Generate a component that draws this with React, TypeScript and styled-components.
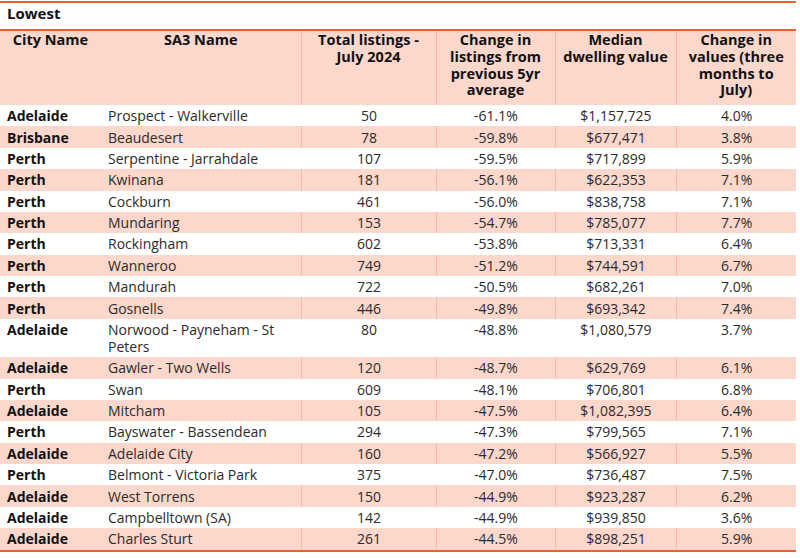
import React from "react";
import styled, { createGlobalStyle } from "styled-components";

const GlobalStyle = createGlobalStyle`
  body {
    margin: 0;
    background: #ffffff;
    font-family: "Open Sans", "Noto Sans", sans-serif;
  }
`;

interface Row {
  city: string;
  sa3: string;
  total: string;
  change: string;
  median: string;
  values: string;
}

const rows: Row[] = [
  { city: "Adelaide", sa3: "Prospect - Walkerville", total: "50", change: "-61.1%", median: "$1,157,725", values: "4.0%" },
  { city: "Brisbane", sa3: "Beaudesert", total: "78", change: "-59.8%", median: "$677,471", values: "3.8%" },
  { city: "Perth", sa3: "Serpentine - Jarrahdale", total: "107", change: "-59.5%", median: "$717,899", values: "5.9%" },
  { city: "Perth", sa3: "Kwinana", total: "181", change: "-56.1%", median: "$622,353", values: "7.1%" },
  { city: "Perth", sa3: "Cockburn", total: "461", change: "-56.0%", median: "$838,758", values: "7.1%" },
  { city: "Perth", sa3: "Mundaring", total: "153", change: "-54.7%", median: "$785,077", values: "7.7%" },
  { city: "Perth", sa3: "Rockingham", total: "602", change: "-53.8%", median: "$713,331", values: "6.4%" },
  { city: "Perth", sa3: "Wanneroo", total: "749", change: "-51.2%", median: "$744,591", values: "6.7%" },
  { city: "Perth", sa3: "Mandurah", total: "722", change: "-50.5%", median: "$682,261", values: "7.0%" },
  { city: "Perth", sa3: "Gosnells", total: "446", change: "-49.8%", median: "$693,342", values: "7.4%" },
  { city: "Adelaide", sa3: "Norwood - Payneham - St Peters", total: "80", change: "-48.8%", median: "$1,080,579", values: "3.7%" },
  { city: "Adelaide", sa3: "Gawler - Two Wells", total: "120", change: "-48.7%", median: "$629,769", values: "6.1%" },
  { city: "Perth", sa3: "Swan", total: "609", change: "-48.1%", median: "$706,801", values: "6.8%" },
  { city: "Adelaide", sa3: "Mitcham", total: "105", change: "-47.5%", median: "$1,082,395", values: "6.4%" },
  { city: "Perth", sa3: "Bayswater - Bassendean", total: "294", change: "-47.3%", median: "$799,565", values: "7.1%" },
  { city: "Adelaide", sa3: "Adelaide City", total: "160", change: "-47.2%", median: "$566,927", values: "5.5%" },
  { city: "Perth", sa3: "Belmont - Victoria Park", total: "375", change: "-47.0%", median: "$736,487", values: "7.5%" },
  { city: "Adelaide", sa3: "West Torrens", total: "150", change: "-44.9%", median: "$923,287", values: "6.2%" },
  { city: "Adelaide", sa3: "Campbelltown (SA)", total: "142", change: "-44.9%", median: "$939,850", values: "3.6%" },
  { city: "Adelaide", sa3: "Charles Sturt", total: "261", change: "-44.5%", median: "$898,251", values: "5.9%" },
];

const ORANGE = "#f0602a";
const SHADE = "#fbd7cc";
const RULE = "#f3bca6";

const Sheet = styled.div`
  width: 796px;
  padding-top: 1px;
`;

const Title = styled.div`
  border-top: 2px solid ${ORANGE};
  border-bottom: 2px solid ${ORANGE};
  height: 26px;
  padding-left: 7px;
  font-size: 15px;
  font-weight: 700;
  line-height: 21px;
  color: #111;
`;

const Table = styled.table`
  width: 796px;
  table-layout: fixed;
  border-collapse: collapse;
  border-bottom: 2px solid ${ORANGE};
  font-size: 14px;
  color: #2b2b2b;
`;

const HeadRow = styled.tr`
  background: ${SHADE};
  height: 74px;
`;

const HeadCell = styled.th<{ $ruled?: boolean }>`
  vertical-align: top;
  text-align: center;
  font-weight: 700;
  font-size: 14.5px;
  line-height: 16.8px;
  color: #111;
  padding: 1px 6px 3px;
  border-left: ${(p) => (p.$ruled ? `1px solid ${RULE}` : "none")};
`;

const BodyRow = styled.tr<{ $shaded: boolean }>`
  background: ${(p) => (p.$shaded ? SHADE : "#ffffff")};
  --rule: ${(p) => (p.$shaded ? RULE : "#ffffff")};
`;

const Cell = styled.td<{ $align?: "left" | "center"; $ruled?: boolean; $bold?: boolean }>`
  vertical-align: top;
  text-align: ${(p) => p.$align ?? "center"};
  font-weight: ${(p) => (p.$bold ? 700 : 400)};
  color: ${(p) => (p.$bold ? "#111" : "#2b2b2b")};
  line-height: 17px;
  padding: 2.2px 6px 2.2px 7px;
  border-left: ${(p) => (p.$ruled ? "1px solid var(--rule)" : "none")};
`;

export default function App() {
  return (
    <Sheet>
      <GlobalStyle />
      <Title>Lowest</Title>
      <Table>
        <colgroup>
          <col style={{ width: 101 }} />
          <col style={{ width: 200 }} />
          <col style={{ width: 135 }} />
          <col style={{ width: 119 }} />
          <col style={{ width: 121 }} />
          <col style={{ width: 120 }} />
        </colgroup>
        <thead>
          <HeadRow>
            <HeadCell>City Name</HeadCell>
            <HeadCell>SA3 Name</HeadCell>
            <HeadCell $ruled>Total listings - July 2024</HeadCell>
            <HeadCell $ruled>Change in listings from previous 5yr average</HeadCell>
            <HeadCell $ruled>Median dwelling value</HeadCell>
            <HeadCell $ruled>Change in values (three months to July)</HeadCell>
          </HeadRow>
        </thead>
        <tbody>
          {rows.map((r, i) => (
            <BodyRow key={i} $shaded={i % 2 === 1}>
              <Cell $align="left" $bold>{r.city}</Cell>
              <Cell $align="left">{r.sa3}</Cell>
              <Cell $ruled>{r.total}</Cell>
              <Cell $ruled>{r.change}</Cell>
              <Cell $ruled>{r.median}</Cell>
              <Cell $ruled>{r.values}</Cell>
            </BodyRow>
          ))}
        </tbody>
      </Table>
    </Sheet>
  );
}
